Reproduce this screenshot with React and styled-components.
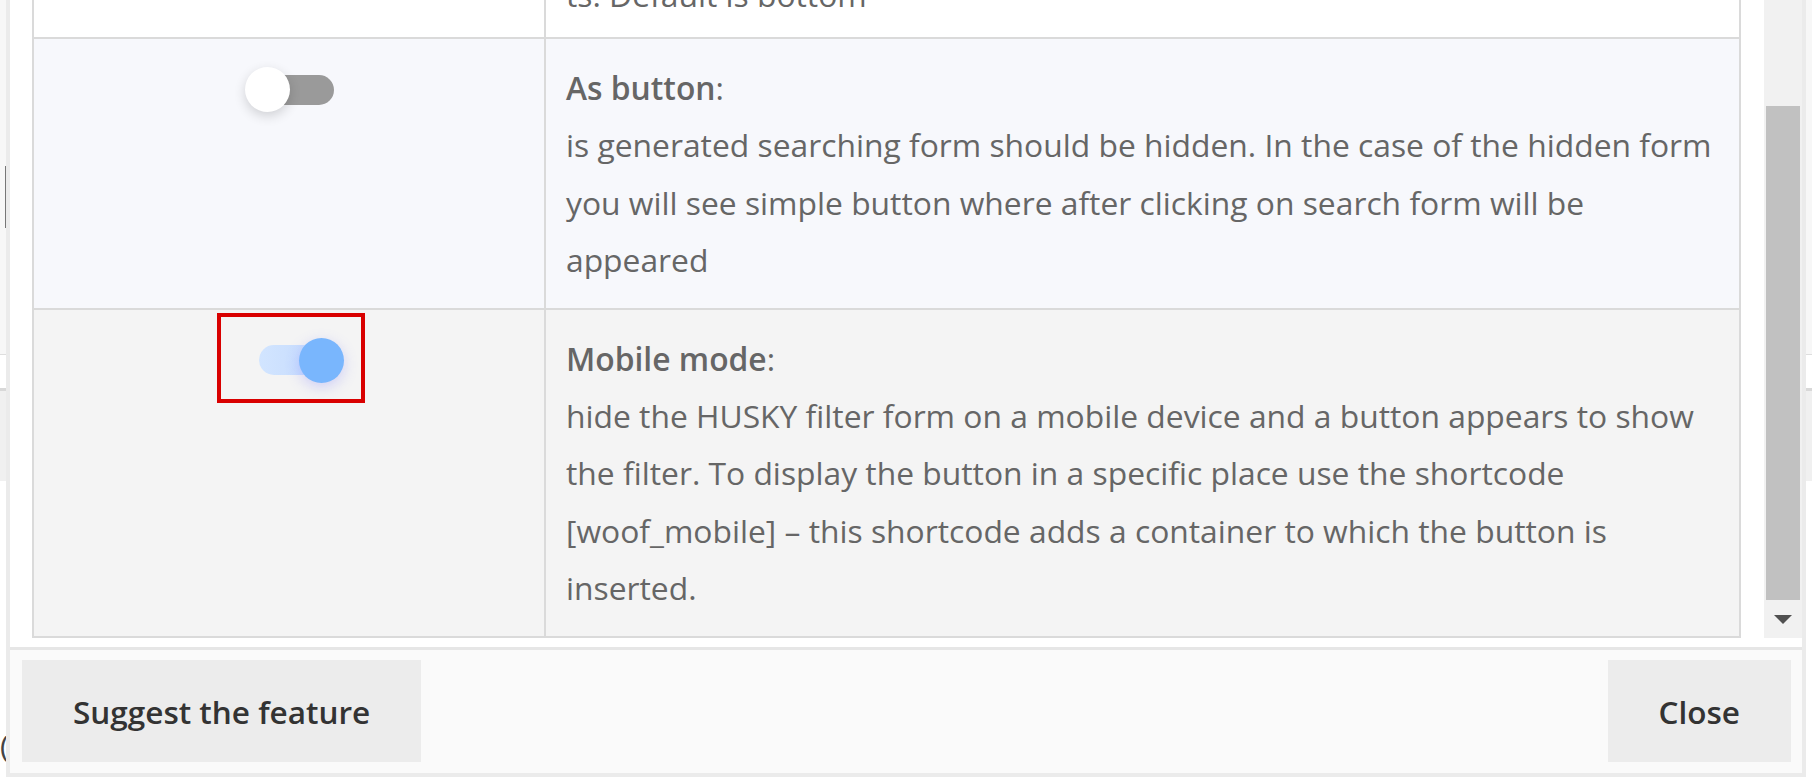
import React from 'react';
import styled, { createGlobalStyle } from 'styled-components';

const GlobalStyle = createGlobalStyle`
  html, body {
    margin: 0;
    padding: 0;
    height: 100%;
    overflow: hidden;
  }
  body {
    font-family: "Open Sans", "Noto Sans", sans-serif;
    background: #fff;
  }
  #root {
    height: 100%;
  }
`;

// background page that peeks out around the modal
const Page = styled.div`
  height: 784px;
  display: flex;
  flex-direction: column;
  background: #fff;
`;

const BgHeader = styled.div`
  height: 355px;
  box-sizing: border-box;
  padding-top: 166px;
  background: #f7f7f7;
  border-bottom: 1px solid #dedede;
`;

const Caret = styled.div`
  width: 1px;
  height: 62px;
  margin-left: 5px;
  background: #777;
`;

const BgBand = styled.div`
  height: 33px;
  background: #fff;
  border-bottom: 3px solid #d8d8d8;
`;

const BgPanel = styled.div`
  height: 90px;
  background: #f0f0f0;
`;

const BgFoot = styled.div`
  flex: 1;
  padding-top: 250px;
  font-size: 30px;
  line-height: 30px;
  color: #444;
`;

// modal
const Modal = styled.div`
  position: fixed;
  left: 6px;
  right: 6px;
  bottom: 7px;
  display: flex;
  flex-direction: column;
  background: #fff;
  border: 4px solid #ebebeb;
  border-top: none;
`;

const Body = styled.div`
  display: flex;
  height: 760px;
  margin-bottom: 9px;
`;

const Viewport = styled.div`
  flex: 1;
  display: flex;
  flex-direction: column;
  justify-content: flex-end;
  overflow: hidden;
  padding: 0 23px 0 22px;
`;

const Scrollbar = styled.div`
  width: 38px;
  display: flex;
  flex-direction: column;
  justify-content: flex-end;
  background: #f1f1f1;
`;

const Thumb = styled.div`
  margin: 0 2px;
  background: #c1c1c1;
`;

const ArrowBox = styled.div`
  height: 38px;
  display: flex;
  align-items: center;
  justify-content: center;
`;

const ArrowDown = styled.div`
  width: 0;
  height: 0;
  border-left: 9px solid transparent;
  border-right: 9px solid transparent;
  border-top: 9px solid #505050;
`;

const Table = styled.div`
  border-left: 2px solid #dadada;
  border-right: 2px solid #dadada;
`;

const Row = styled.div`
  display: grid;
  grid-template-columns: 512px 1fr;
  background: ${(p) => p.$bg};
  border-bottom: 2px solid #dadada;
`;

const ToggleCell = styled.div`
  padding: 20px;
  border-right: 2px solid #dadada;
`;

const DescCell = styled.div`
  padding: 20px 20px ${(p) => p.$padBottom || 20}px;
  font-size: 31.8px;
  line-height: 57.2px;
  color: #666;
  white-space: nowrap;
`;

const Label = styled.strong`
  font-weight: 600;
`;

const Switch = styled.div`
  position: relative;
  display: flex;
  align-items: center;
  width: 89px;
  height: 45px;
  margin: 8px auto 0;
`;

const Track = styled.div`
  width: 75px;
  height: 30px;
  margin-left: 14px;
  border-radius: 15px;
  background: ${(p) => (p.$on ? 'linear-gradient(90deg, #d2e5ff, #c2d8fc)' : '#9a9a9a')};
`;

const Knob = styled.div`
  position: absolute;
  top: 0;
  left: ${(p) => (p.$on ? '54px' : '0')};
  width: 45px;
  height: 45px;
  border-radius: 50%;
  background: ${(p) => (p.$on ? '#79b6fd' : '#fff')};
  box-shadow: ${(p) =>
    p.$on ? '0 4px 14px rgba(110, 110, 250, 0.28)' : '0 4px 12px rgba(0, 0, 0, 0.16)'};
`;

const Highlight = styled.div`
  position: absolute;
  top: -25px;
  bottom: -20px;
  left: -28px;
  right: -31px;
  border: 4px solid #d90000;
  pointer-events: none;
`;

const Footer = styled.div`
  display: flex;
  justify-content: space-between;
  padding: 10px 11px 11px 12px;
  background: #fafafa;
  border-top: 3px solid #e6e6e6;
`;

const Button = styled.button`
  height: 102px;
  padding: 0 51px;
  border: none;
  background: #ececec;
  font-family: inherit;
  font-size: 31.5px;
  font-weight: 600;
  color: #333;
  cursor: pointer;
`;

const Toggle = ({ on, marked }) => (
  <Switch>
    <Track $on={on} />
    <Knob $on={on} />
    {marked && <Highlight />}
  </Switch>
);

const rows = [
  {
    bg: '#fff',
    on: false,
    padBottom: 14,
    label: 'Filter button position',
    lines: [
      'the place where the filter button is shown on the page relative to the produc',
      'ts. Default is bottom',
    ],
  },
  {
    bg: '#f7f8fc',
    on: false,
    label: 'As button',
    lines: [
      'is generated searching form should be hidden. In the case of the hidden form',
      'you will see simple button where after clicking on search form will be',
      'appeared',
    ],
  },
  {
    bg: '#f4f4f4',
    on: true,
    marked: true,
    label: 'Mobile mode',
    lines: [
      'hide the HUSKY filter form on a mobile device and a button appears to show',
      'the filter. To display the button in a specific place use the shortcode',
      '[woof_mobile] \u2013 this shortcode adds a container to which the button is',
      'inserted.',
    ],
  },
];

export default function App() {
  return (
    <>
      <GlobalStyle />
      <Page>
        <BgHeader>
          <Caret />
        </BgHeader>
        <BgBand />
        <BgPanel />
        <BgFoot>(</BgFoot>
      </Page>

      <Modal>
        <Body>
          <Viewport>
            <Table>
              {rows.map((r) => (
                <Row key={r.label} $bg={r.bg}>
                  <ToggleCell>
                    <Toggle on={r.on} marked={r.marked} />
                  </ToggleCell>
                  <DescCell $padBottom={r.padBottom}>
                    <Label>{r.label}</Label>:
                    {r.lines.map((l, i) => (
                      <React.Fragment key={i}>
                        <br />
                        {l}
                      </React.Fragment>
                    ))}
                  </DescCell>
                </Row>
              ))}
            </Table>
          </Viewport>
          <Scrollbar>
            <Thumb style={{ height: 494 }} />
            <ArrowBox>
              <ArrowDown />
            </ArrowBox>
          </Scrollbar>
        </Body>
        <Footer>
          <Button>Suggest the feature</Button>
          <Button>Close</Button>
        </Footer>
      </Modal>
    </>
  );
}
